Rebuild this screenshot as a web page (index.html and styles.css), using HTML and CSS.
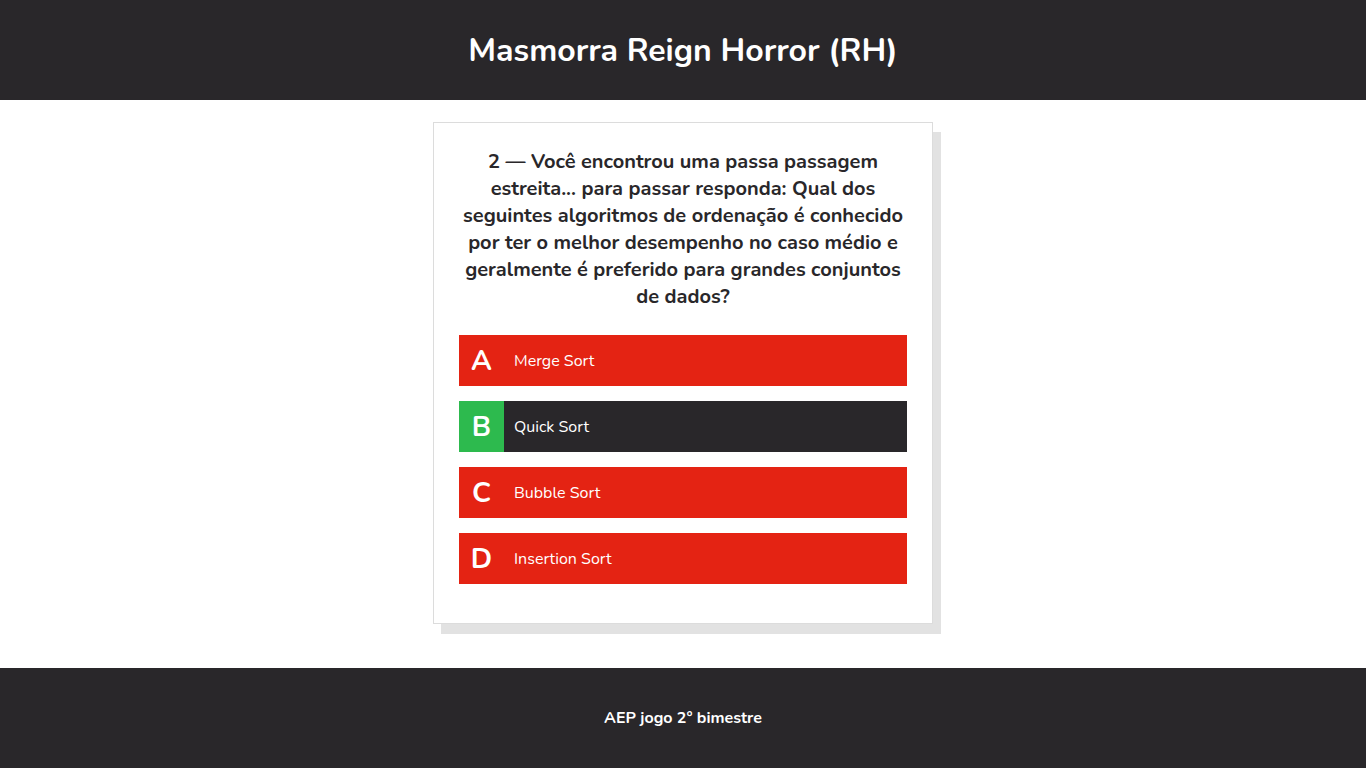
FILE: index.html
```html
<!DOCTYPE html>
<html lang="pt-BR">
<head>
<meta charset="utf-8">
<title>Masmorra Reign Horror (RH)</title>
<link rel="stylesheet" href="styles.css">
</head>
<body>
<header class="topbar">
  <h1 class="title">Masmorra Reign Horror (RH)</h1>
</header>
<main class="main">
  <section class="card">
    <h2 class="question">2 — Você encontrou uma passa passagem estreita... para passar responda: Qual dos seguintes algoritmos de ordenação é conhecido por ter o melhor desempenho no caso médio e geralmente é preferido para grandes conjuntos de dados?</h2>
    <ul class="options">
      <li class="option"><span class="letter">A</span><span class="label">Merge Sort</span></li>
      <li class="option option-selected"><span class="letter">B</span><span class="label">Quick Sort</span></li>
      <li class="option"><span class="letter">C</span><span class="label">Bubble Sort</span></li>
      <li class="option"><span class="letter">D</span><span class="label">Insertion Sort</span></li>
    </ul>
  </section>
</main>
<footer class="footer">
  <p class="footer-text">AEP jogo 2° bimestre</p>
</footer>
</body>
</html>
```
FILE: styles.css
```css
* { box-sizing: border-box; }
html, body { margin: 0; padding: 0; }
body {
  font-family: "Nunito", "Lato", "Open Sans", sans-serif;
  background: #ffffff;
  color: #29272a;
}
.topbar {
  height: 100px;
  background: #29272a;
  display: flex;
  align-items: center;
  justify-content: center;
}
.title {
  margin: 0;
  color: #ffffff;
  font-size: 32px;
  font-weight: 700;
}
.main {
  display: flex;
  justify-content: center;
  padding: 22px 0 44px;
}
.card {
  width: 500px;
  border: 1px solid #dcdcdc;
  background: #fff;
  box-shadow: 8px 10px 0 #e2e2e2;
  padding: 25px 25px 39px;
}
.question {
  margin: 0 0 25px;
  font-size: 20px;
  line-height: 27px;
  font-weight: 700;
  text-align: center;
  color: #29272a;
}
.options {
  list-style: none;
  margin: 0;
  padding: 0;
  display: flex;
  flex-direction: column;
  gap: 15px;
}
.option {
  display: flex;
  align-items: center;
  height: 51px;
  background: #e42313;
  color: #fff;
}
.letter {
  width: 45px;
  height: 100%;
  display: flex;
  align-items: center;
  justify-content: center;
  font-size: 28px;
  font-weight: 700;
}
.label {
  padding-left: 10px;
  font-size: 16px;
}
.option-selected { background: #29272a; }
.option-selected .letter { background: #2dba4e; }
.footer {
  height: 100px;
  background: #29272a;
  display: flex;
  align-items: center;
  justify-content: center;
}
.footer-text {
  margin: 0;
  color: #fff;
  font-size: 16px;
  font-weight: 700;
}
```
